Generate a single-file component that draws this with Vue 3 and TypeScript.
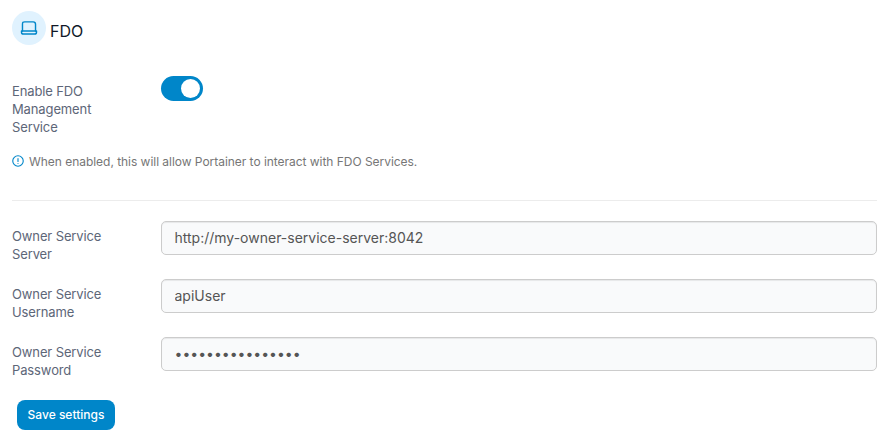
<script setup lang="ts">
import { ref } from 'vue'

interface Field {
  id: string
  label: string
  type: string
  value: string
}

const enabled = ref(true)
const fields = ref<Field[]>([
  { id: 'server', label: 'Owner Service Server', type: 'text', value: 'http://my-owner-service-server:8042' },
  { id: 'username', label: 'Owner Service Username', type: 'text', value: 'apiUser' },
  { id: 'password', label: 'Owner Service Password', type: 'password', value: 'fdo-api-password' },
])
</script>

<template>
  <form class="settings" @submit.prevent>
    <header class="title">
      <span class="badge">
        <svg viewBox="0 0 24 24" width="18" height="18" fill="none" stroke="currentColor" stroke-width="1.9" stroke-linecap="round" stroke-linejoin="round">
          <path d="M3.300 16V7C3.300 4.500 4 3.800 6.400 3.800h11.200c2.400 0 3.100.7 3.100 3.200v9" />
          <path d="M2 16h20v1.600c0 1.700-.8 2.500-2.500 2.500h-15C2.800 20.100 2 19.300 2 17.600z" />
        </svg>
      </span>
      <h1>FDO</h1>
    </header>

    <div class="row enable">
      <label for="enable">Enable FDO Management Service</label>
      <button id="enable" type="button" role="switch" class="switch" :class="{ on: enabled }" :aria-checked="enabled" @click="enabled = !enabled">
        <span class="knob"></span>
      </button>
    </div>

    <p class="hint">
      <svg viewBox="0 0 24 24" width="12" height="12" fill="none" stroke="currentColor" stroke-width="2.2" stroke-linecap="round">
        <circle cx="12" cy="12" r="10.500" />
        <path d="M12 7v6M12 17v.1" />
      </svg>
      <span>When enabled, this will allow Portainer to interact with FDO Services.</span>
    </p>

    <div class="fields">
      <div v-for="field in fields" :key="field.id" class="row">
        <label :for="field.id">{{ field.label }}</label>
        <input :id="field.id" v-model="field.value" :type="field.type" autocomplete="off" />
      </div>
    </div>

    <button type="submit" class="save">Save settings</button>
  </form>
</template>

<style>
body {
  background: #fff;
}
</style>

<style scoped>
.settings {
  box-sizing: border-box;
  height: 447px;
  padding: 11px 12px 0;
  font-family: Inter, "Liberation Sans", sans-serif;
  overflow: hidden;
}
.title {
  display: flex;
  align-items: center;
  gap: 4px;
  height: 34px;
}
.badge {
  display: grid;
  place-items: center;
  width: 34px;
  height: 34px;
  border-radius: 50%;
  background: #e0f2fe;
  color: #0086c9;
}
h1 {
  margin: 5px 0 0;
  font-size: 16px;
  font-weight: 400;
  line-height: 20px;
  color: #101828;
}
.row {
  display: grid;
  grid-template-columns: 110px 716px;
  column-gap: 39px;
  align-items: start;
}
label {
  padding-top: 7px;
  font-size: 13px;
  font-weight: 400;
  line-height: 18px;
  letter-spacing: -0.12px;
  color: #5d6678;
}
.enable {
  margin-top: 30px;
  height: 61px;
}
.switch {
  display: flex;
  align-items: center;
  justify-content: flex-start;
  width: 42px;
  height: 25px;
  margin-top: 1px;
  padding: 0 3px;
  border: 0;
  border-radius: 13px;
  background: #98a2b3;
}
.switch.on {
  justify-content: flex-end;
  background: #0086c9;
}
.knob {
  width: 19px;
  height: 19px;
  border-radius: 50%;
  background: #fff;
}
.hint {
  display: flex;
  align-items: center;
  gap: 5px;
  height: 18px;
  margin: 16px 0 0;
  font-size: 12px;
  letter-spacing: -0.035px;
  color: #767676;
}
.hint svg {
  flex: none;
  color: #0086c9;
}
.fields {
  display: flex;
  flex-direction: column;
  gap: 15px;
  margin-top: 30px;
  padding-top: 20px;
  border-top: 1px solid #ececec;
}
.fields .row {
  height: 43px;
}
.fields label {
  padding-top: 6px;
}
input {
  box-sizing: border-box;
  width: 100%;
  height: 34px;
  padding: 5px 12px 7px 12.5px;
  border: 1px solid #ccc;
  border-radius: 5px;
  outline: none;
  background: #f9fafb;
  box-shadow: inset 0 1px 1px rgba(0, 0, 0, 0.075);
  font: 400 14px/20px Inter, "Liberation Sans", sans-serif;
  color: #555;
}
.save {
  width: 98px;
  height: 30px;
  margin: 20px 0 0 5px;
  padding: 0;
  border: 0;
  border-radius: 8px;
  background: #0086c9;
  color: #fff;
  font: 500 12px/18px Inter, "Liberation Sans", sans-serif;
}
</style>
